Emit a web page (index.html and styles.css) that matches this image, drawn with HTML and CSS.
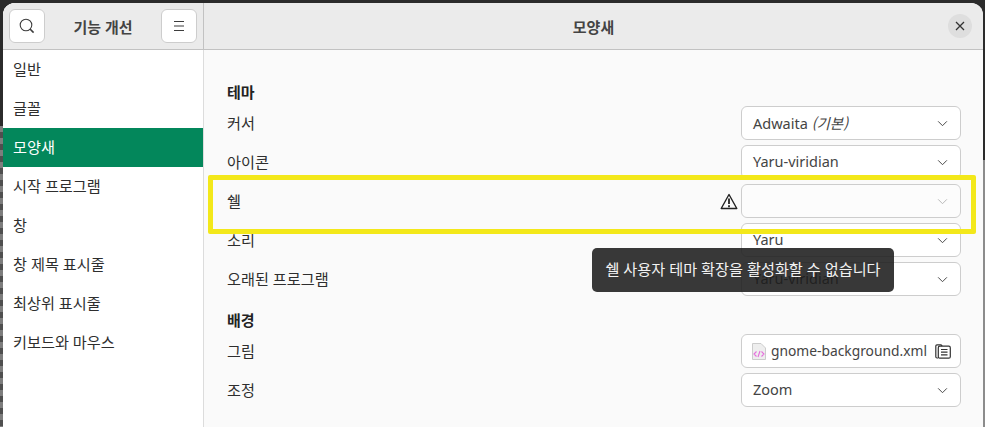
FILE: index.html
```html
<!DOCTYPE html>
<html lang="ko">

<head>
    <meta charset="UTF-8">
    <title>기능 개선</title>
    <link rel="stylesheet" href="styles.css">
</head>

<body>
    <div class="window">
        <div class="sidebar">
            <div class="header side-header">
                <button class="head-btn">
                    <svg width="16" height="16" viewBox="0 0 16 16" fill="none" stroke="#3d3d3d" stroke-width="1.1">
                        <circle cx="7" cy="7" r="5.8" />
                        <path d="M11 11l3.6 3.6" stroke-width="1.6" />
                    </svg>
                </button>
                <h1 class="title">기능 개선</h1>
                <button class="head-btn">
                    <svg width="16" height="16" viewBox="0 0 16 16" stroke="#3d3d3d" stroke-width="1.1">
                        <path d="M3 3.5h10M3 8h10M3 12.5h10" />
                    </svg>
                </button>
            </div>
            <ul class="nav">
                <li>일반</li>
                <li>글꼴</li>
                <li class="active">모양새</li>
                <li>시작 프로그램</li>
                <li>창</li>
                <li>창 제목 표시줄</li>
                <li>최상위 표시줄</li>
                <li>키보드와 마우스</li>
            </ul>
        </div>

        <div class="main">
            <div class="header main-header">
                <h1 class="title">모양새</h1>
                <button class="close-btn">
                    <svg width="10" height="10" viewBox="0 0 10 10" stroke="#333" stroke-width="1.3">
                        <path d="M1 1l8 8M9 1l-8 8" />
                    </svg>
                </button>
            </div>
            <div class="content">
                <h2 class="section">테마</h2>
                <div class="row">
                    <span class="label">커서</span>
                    <div class="combo"><span>Adwaita <i>(기본)</i></span><svg class="arrow" viewBox="0 0 12 8"><path d="M1 1.5l5 5 5-5" /></svg></div>
                </div>
                <div class="row">
                    <span class="label">아이콘</span>
                    <div class="combo"><span>Yaru-viridian</span><svg class="arrow" viewBox="0 0 12 8"><path d="M1 1.5l5 5 5-5" /></svg></div>
                </div>
                <div class="row">
                    <span class="label">쉘</span>
                    <svg class="warn" width="18" height="17" viewBox="0 0 18 17" fill="none" stroke="#222" stroke-width="1.4">
                        <path d="M9 1.5L1.2 15.5h15.6z" stroke-linejoin="round" />
                        <path d="M9 5.5v5.5M9 12.2v2" stroke-width="1.8" />
                    </svg>
                    <div class="combo disabled"><span></span><svg class="arrow" viewBox="0 0 12 8"><path d="M1 1.5l5 5 5-5" /></svg></div>
                </div>
                <div class="row">
                    <span class="label">소리</span>
                    <div class="combo"><span>Yaru</span><svg class="arrow" viewBox="0 0 12 8"><path d="M1 1.5l5 5 5-5" /></svg></div>
                </div>
                <div class="row">
                    <span class="label">오래된 프로그램</span>
                    <div class="combo"><span>Yaru-viridian</span><svg class="arrow" viewBox="0 0 12 8"><path d="M1 1.5l5 5 5-5" /></svg></div>
                </div>

                <h2 class="section second">배경</h2>
                <div class="row">
                    <span class="label">그림</span>
                    <div class="combo file">
                        <svg class="file-icon" width="14" height="17" viewBox="0 0 14 17">
                            <path d="M.5.5h8.500l4.500 4.500v11.500h-13z" fill="#eeeeee" stroke="#cccccc" />
                            <path d="M4.500 8.500l-2.500 2.500 2.500 2.500M9.500 8.500l2.500 2.500-2.500 2.500M8 8l-2 6" fill="none" stroke="#e56fdc" stroke-width="1.100" />
                        </svg>
                        <span class="file-name">gnome-background.xml</span>
                        <svg class="file-icon" width="16" height="15" viewBox="0 0 16 15" fill="none" stroke="#333" stroke-width="1.2">
                            <path d="M3 14H2C1.300 14 .8 13.500 .8 12.800V2C.8 1.300 1.300 .8 2 .8H6l1.200 1.200" />
                            <rect x="3.300" y="2.200" width="12" height="12" rx="1.500" />
                            <path d="M6 5.500h6.500M6 8.200h6.500M6 10.900h6.500" />
                        </svg>
                    </div>
                </div>
                <div class="row">
                    <span class="label">조정</span>
                    <div class="combo"><span>Zoom</span><svg class="arrow" viewBox="0 0 12 8"><path d="M1 1.5l5 5 5-5" /></svg></div>
                </div>
            </div>
            <div class="toast">쉘 사용자 테마 확장을 활성화할 수 없습니다</div>
        </div>
    </div>
    <div class="highlight"></div>
</body>

</html>
```
FILE: styles.css
```css
* {
    box-sizing: border-box;
}

html,
body {
    margin: 0;
    height: 100%;
}

body {
    position: relative;
    overflow: hidden;
    background-color: #8c8c8c;
    background-image:
        linear-gradient(#2b2b2b, #2b2b2b),
        linear-gradient(#2b2b2b, #2b2b2b),
        repeating-linear-gradient(#4f4f4f 0 6px, #7d7d7d 6px 12px);
    background-size: 100% 126px, 2px 160px, 3px 100%;
    background-position: 0 0, 100% 0, 0 0;
    background-repeat: no-repeat;
    padding: 3px 2px 0 3px;
    font-family: "Noto Sans", "Noto Sans CJK KR", sans-serif;
    font-size: 15.2px;
    color: #2e2e2e;
}

.window {
    display: flex;
    height: 424px;
    background-color: #fafafa;
    border-radius: 12px 12px 0 0;
    overflow: hidden;
    position: relative;
}

.header {
    height: 47px;
    flex-shrink: 0;
    display: flex;
    align-items: center;
    background-color: #ebebeb;
    border-bottom: 1px solid #c2c2c2;
}

.title {
    margin: 0;
    font-size: 15px;
    font-weight: 700;
    color: #444;
}

.sidebar {
    width: 201px;
    flex-shrink: 0;
    display: flex;
    flex-direction: column;
    background-color: #fff;
    border-right: 1px solid #dcdcdc;
}

.side-header {
    justify-content: space-between;
    padding: 0 6px;
    margin-right: -1px;
    border-right: 1px solid #c2c2c2;
}

.head-btn {
    display: flex;
    align-items: center;
    justify-content: center;
    width: 36px;
    height: 34px;
    padding: 0;
    background-color: #fff;
    border: 1px solid #cdcdcd;
    border-radius: 6px;
}

.nav {
    list-style: none;
    margin: 0;
    padding: 0;
}

.nav li {
    height: 39px;
    line-height: 38px;
    padding-left: 10px;
}

.nav .active {
    background-color: #03875b;
    color: #fff;
}

.main {
    flex: 1;
    display: flex;
    flex-direction: column;
    position: relative;
}

.main-header {
    justify-content: center;
    position: relative;
}

.close-btn {
    position: absolute;
    right: 11px;
    top: 11px;
    display: flex;
    align-items: center;
    justify-content: center;
    width: 24px;
    height: 24px;
    padding: 0;
    border: 0;
    border-radius: 50%;
    background-color: #dedede;
}

.content {
    display: flex;
    flex-direction: column;
    gap: 5px;
    padding: 32px 22px 0 23px;
}

.section {
    margin: 0 0 -1px;
    height: 20px;
    line-height: 20px;
    font-size: 15px;
    font-weight: 700;
    color: #222;
}

.section.second {
    margin-top: 9px;
}

.row {
    display: flex;
    align-items: center;
    height: 34px;
}

.label {
    flex: 1;
    padding-bottom: 2px;
}

.warn {
    margin-right: 3px;
}

.combo {
    display: flex;
    align-items: center;
    justify-content: space-between;
    width: 220px;
    height: 34px;
    padding: 0 12px 0 11px;
    background-color: #fff;
    border: 1px solid #cdcdcd;
    border-radius: 6px;
    color: #444;
    font-size: 14.5px;
    white-space: nowrap;
}

.combo span {
    padding-bottom: 2px;
}

.combo i {
    font-family: "Noto Sans CJK KR", sans-serif;
}

.arrow {
    width: 11px;
    height: 7px;
    fill: none;
    stroke: #444;
    stroke-width: 1.1;
}

.disabled {
    background-color: #fcfcfc;
}

.disabled .arrow {
    stroke: #b5b5b5;
}

.file {
    padding: 0 9px 0 10px;
    gap: 5px;
}

.file-icon {
    flex-shrink: 0;
}

.file-name {
    flex: 1;
    font-size: 13.8px;
}

.toast {
    position: absolute;
    left: 388px;
    top: 245px;
    width: 302px;
    height: 44px;
    line-height: 43px;
    text-align: center;
    background-color: rgba(28, 28, 28, 0.88);
    border-radius: 5px;
    color: #f2f2f2;
}

.highlight {
    position: absolute;
    left: 208px;
    top: 175px;
    width: 768px;
    height: 59px;
    border: 5px solid #f3e81a;
    border-radius: 2px;
}
```
